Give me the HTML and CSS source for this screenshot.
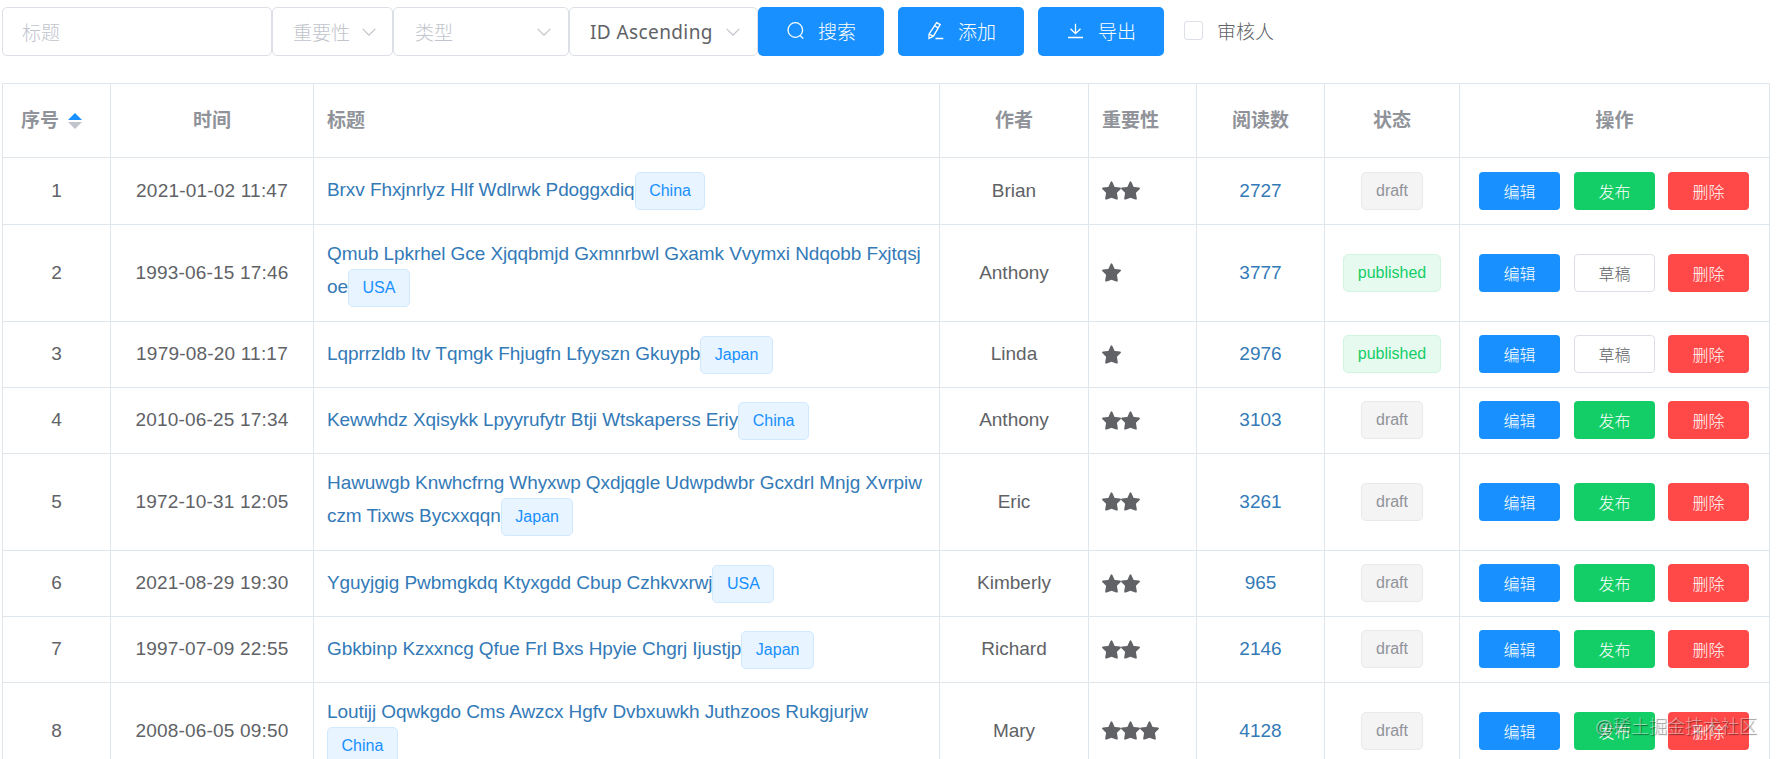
FILE: index.html
```html
<!DOCTYPE html>
<html lang="zh-CN">
<head>
    <meta charset="UTF-8">
    <meta name="viewport" content="width=device-width, initial-scale=1.0">
    <title>文章列表</title>
    <link rel="stylesheet" href="styles.css">
</head>
<body>
    <!-- shared icons -->
    <svg class="icon-defs">
        <symbol id="star" viewBox="0 0 19 19"><path d="M8.6 1Q9.5-.6 10.4 1L12.4 5.4Q12.6 5.9 13.2 6L17.9 6.6Q19.6 7 18.5 8.2L15.2 11.5Q14.9 11.8 15 12.4L15.8 17.2Q15.9 19.1 14.3 18.4L10.1 16.9Q9.5 16.7 8.9 16.9L4.7 18.4Q3.1 19.1 3.2 17.2L4 12.4Q4.1 11.8 3.8 11.5L.5 8.2Q-.6 7 1.1 6.6L5.8 6Q6.4 5.9 6.6 5.4Z"/></symbol>
        <symbol id="arrow" viewBox="0 0 14 8"><path d="M.7.8L7 7.2L13.3.8"/></symbol>
    </svg>

    <div class="filter">
        <div class="field title-field"><span>标题</span></div>
        <div class="field level-field"><span>重要性</span><svg class="arrow"><use href="#arrow"/></svg></div>
        <div class="field type-field"><span>类型</span><svg class="arrow"><use href="#arrow"/></svg></div>
        <div class="field sort-field"><span>ID Ascending</span><svg class="arrow"><use href="#arrow"/></svg></div>
        <button class="tool-btn"><svg viewBox="0 0 19 19"><circle cx="9.3" cy="9" r="7.3"/><path d="M14 14.5L17.3 17.6"/></svg>搜索</button>
        <button class="tool-btn"><svg viewBox="0 0 19 19"><path d="M10.6 1.6L14.2 3.6L7.4 15.2L3 17.4L3 13.1ZM8.7 4.9L12.3 6.9M3 13.1L7.4 15.2M9.5 17.5H17.3"/></svg>添加</button>
        <button class="tool-btn"><svg viewBox="0 0 19 19"><path d="M9.5 2.8V12.6M4.5 7.7L9.5 12.7L14.5 7.7M2 16.5H17"/></svg>导出</button>
        <label class="reviewer"><span class="checkbox"></span>审核人</label>
    </div>

    <table class="list">
        <colgroup>
            <col class="col-id"><col class="col-date"><col class="col-title"><col class="col-author"><col class="col-level"><col class="col-reads"><col class="col-status"><col class="col-actions">
        </colgroup>
        <thead>
            <tr>
                <th><div class="sortable">序号<span class="carets"><i class="up"></i><i class="down"></i></span></div></th>
                <th>时间</th>
                <th class="left">标题</th>
                <th>作者</th>
                <th class="left">重要性</th>
                <th>阅读数</th>
                <th>状态</th>
                <th>操作</th>
            </tr>
        </thead>
        <tbody>
            <tr class="first">
                <td>1</td>
                <td class="date">2021-01-02 11:47</td>
                <td class="title"><a>Brxv Fhxjnrlyz Hlf Wdlrwk Pdoggxdiq</a><span class="tag">China</span></td>
                <td>Brian</td>
                <td class="stars"><svg><use href="#star"/></svg><svg><use href="#star"/></svg></td>
                <td class="reads">2727</td>
                <td><span class="tag info">draft</span></td>
                <td><div class="actions"><button class="edit">编辑</button><button class="publish">发布</button><button class="delete">删除</button></div></td>
            </tr>
            <tr class="tall">
                <td>2</td>
                <td class="date">1993-06-15 17:46</td>
                <td class="title"><a>Qmub Lpkrhel Gce Xjqqbmjd Gxmnrbwl Gxamk Vvymxi Ndqobb Fxjtqsj<br>oe</a><span class="tag">USA</span></td>
                <td>Anthony</td>
                <td class="stars"><svg><use href="#star"/></svg></td>
                <td class="reads">3777</td>
                <td><span class="tag success">published</span></td>
                <td><div class="actions"><button class="edit">编辑</button><button class="to-draft">草稿</button><button class="delete">删除</button></div></td>
            </tr>
            <tr>
                <td>3</td>
                <td class="date">1979-08-20 11:17</td>
                <td class="title"><a>Lqprrzldb Itv Tqmgk Fhjugfn Lfyyszn Gkuypb</a><span class="tag">Japan</span></td>
                <td>Linda</td>
                <td class="stars"><svg><use href="#star"/></svg></td>
                <td class="reads">2976</td>
                <td><span class="tag success">published</span></td>
                <td><div class="actions"><button class="edit">编辑</button><button class="to-draft">草稿</button><button class="delete">删除</button></div></td>
            </tr>
            <tr>
                <td>4</td>
                <td class="date">2010-06-25 17:34</td>
                <td class="title"><a>Kewwhdz Xqisykk Lpyyrufytr Btji Wtskaperss Eriy</a><span class="tag">China</span></td>
                <td>Anthony</td>
                <td class="stars"><svg><use href="#star"/></svg><svg><use href="#star"/></svg></td>
                <td class="reads">3103</td>
                <td><span class="tag info">draft</span></td>
                <td><div class="actions"><button class="edit">编辑</button><button class="publish">发布</button><button class="delete">删除</button></div></td>
            </tr>
            <tr class="tall">
                <td>5</td>
                <td class="date">1972-10-31 12:05</td>
                <td class="title"><a>Hawuwgb Knwhcfrng Whyxwp Qxdjqgle Udwpdwbr Gcxdrl Mnjg Xvrpiw<br>czm Tixws Bycxxqqn</a><span class="tag">Japan</span></td>
                <td>Eric</td>
                <td class="stars"><svg><use href="#star"/></svg><svg><use href="#star"/></svg></td>
                <td class="reads">3261</td>
                <td><span class="tag info">draft</span></td>
                <td><div class="actions"><button class="edit">编辑</button><button class="publish">发布</button><button class="delete">删除</button></div></td>
            </tr>
            <tr>
                <td>6</td>
                <td class="date">2021-08-29 19:30</td>
                <td class="title"><a>Yguyjgig Pwbmgkdq Ktyxgdd Cbup Czhkvxrwj</a><span class="tag">USA</span></td>
                <td>Kimberly</td>
                <td class="stars"><svg><use href="#star"/></svg><svg><use href="#star"/></svg></td>
                <td class="reads">965</td>
                <td><span class="tag info">draft</span></td>
                <td><div class="actions"><button class="edit">编辑</button><button class="publish">发布</button><button class="delete">删除</button></div></td>
            </tr>
            <tr>
                <td>7</td>
                <td class="date">1997-07-09 22:55</td>
                <td class="title"><a>Gbkbinp Kzxxncg Qfue Frl Bxs Hpyie Chgrj Ijustjp</a><span class="tag">Japan</span></td>
                <td>Richard</td>
                <td class="stars"><svg><use href="#star"/></svg><svg><use href="#star"/></svg></td>
                <td class="reads">2146</td>
                <td><span class="tag info">draft</span></td>
                <td><div class="actions"><button class="edit">编辑</button><button class="publish">发布</button><button class="delete">删除</button></div></td>
            </tr>
            <tr class="tall">
                <td>8</td>
                <td class="date">2008-06-05 09:50</td>
                <td class="title"><a>Loutijj Oqwkgdo Cms Awzcx Hgfv Dvbxuwkh Juthzoos Rukgjurjw</a><br><span class="tag">China</span></td>
                <td>Mary</td>
                <td class="stars"><svg><use href="#star"/></svg><svg><use href="#star"/></svg><svg><use href="#star"/></svg></td>
                <td class="reads">4128</td>
                <td><span class="tag info">draft</span></td>
                <td><div class="actions"><button class="edit">编辑</button><button class="publish">发布</button><button class="delete">删除</button></div></td>
            </tr>
        </tbody>
    </table>
    <div class="watermark">@稀土掘金技术社区</div>
</body>
</html>
```

FILE: styles.css
```css
* {
    box-sizing: border-box;
}
body {
    position: relative;
    height: 759px;
    margin: 0;
    padding: 7px 0 0 2px;
    overflow: hidden;
    background-color: #fff;
    color: #606266;
    font-family: "Liberation Sans", "Noto Sans CJK SC", sans-serif;
    font-size: 19px;
    font-weight: 300;
}
button {
    font-family: inherit;
    font-weight: 300;
    border: none;
    padding: 0;
    cursor: pointer;
}
.icon-defs {
    display: none;
}

/* filter bar */
.filter {
    display: flex;
    align-items: center;
    height: 49px;
    margin-bottom: 27px;
}
.field {
    display: flex;
    align-items: center;
    justify-content: space-between;
    height: 49px;
    padding: 0 17px 0 20px;
    border: 1px solid #dcdfe6;
    border-radius: 5px;
    color: #c0c4cc;
    white-space: nowrap;
}
.title-field {
    width: 270px;
    padding-left: 19px;
}
.level-field {
    width: 121px;
    padding-right: 16px;
}
.type-field {
    width: 176px;
    padding-left: 21px;
}
.sort-field {
    width: 189px;
    color: #606266;
    font-family: "Noto Sans", sans-serif;
    font-weight: normal;
    letter-spacing: 0.4px;
}
.arrow {
    width: 14px;
    height: 8px;
    fill: none;
    stroke: #c0c4cc;
    stroke-width: 1.2;
}
.tool-btn {
    display: flex;
    align-items: center;
    gap: 13px;
    width: 126px;
    height: 49px;
    margin-right: 14px;
    padding: 0 0 2px 28px;
    border-radius: 5px;
    background-color: #1890ff;
    color: #fff;
    font-size: 19px;
}
.tool-btn svg {
    width: 19px;
    height: 19px;
    fill: none;
    stroke: #fff;
    stroke-width: 1.3;
}
.reviewer {
    display: flex;
    align-items: center;
    gap: 14px;
    margin-left: 6px;
    padding-bottom: 2px;
}
.checkbox {
    width: 19px;
    height: 19px;
    border: 1px solid #dcdfe6;
    border-radius: 3px;
}

/* table */
.list {
    width: 1768px;
    table-layout: fixed;
    border-collapse: separate;
    border-spacing: 0;
    border: solid #dfe6ec;
    border-width: 1px 0 0 1px;
}
.col-id { width: 108px; }
.col-date { width: 203px; }
.col-title { width: 626px; }
.col-author { width: 149px; }
.col-level { width: 108px; }
.col-reads { width: 128px; }
.col-status { width: 135px; }
.col-actions { width: 310px; }
.list th,
.list td {
    height: 66px;
    padding: 0 0 1px;
    border: solid #dfe6ec;
    border-width: 0 1px 1px 0;
    text-align: center;
    vertical-align: middle;
    line-height: 30px;
}
.list th {
    height: 74px;
    padding: 0;
    color: #909399;
    font-weight: bold;
}
.list th.left {
    padding-left: 13px;
    text-align: left;
}
.list .first td {
    height: 67px;
}
.list .tall td {
    height: 97px;
}
.sortable {
    display: flex;
    align-items: center;
    padding-left: 18px;
}
.carets {
    display: flex;
    flex-direction: column;
    gap: 2px;
    margin-left: 9px;
}
.carets i {
    width: 0;
    height: 0;
    border: solid transparent;
}
.carets .up {
    border-width: 0 7px 7px;
    border-bottom-color: #1890ff;
}
.carets .down {
    border-width: 7px 7px 0;
    border-top-color: #c0c4cc;
}
.date {
    letter-spacing: 0.2px;
}
.reads {
    color: #337ab7;
}
.list td.title {
    padding: 14px 0 0 13px;
    text-align: left;
    vertical-align: top;
    white-space: nowrap;
}
.title a {
    color: #337ab7;
    letter-spacing: -0.08px;
}
.tag {
    display: inline-block;
    height: 38px;
    padding: 0 13.5px;
    border: 1px solid #d1e9ff;
    border-radius: 5px;
    background-color: #e8f4ff;
    color: #1890ff;
    font-size: 16px;
    line-height: 36px;
    vertical-align: middle;
}
.title .tag {
    vertical-align: baseline;
}
.tag.info {
    border-color: #e9e9eb;
    background-color: #f4f4f5;
    color: #909399;
}
.tag.success {
    border-color: #d0f5e0;
    background-color: #e7faf0;
    color: #13ce66;
}
.list td.stars {
    padding-left: 13px;
    text-align: left;
    font-size: 0;
}
.stars svg {
    width: 19px;
    height: 19px;
    fill: #606266;
    vertical-align: middle;
}
.actions {
    display: flex;
    gap: 13px;
    padding-left: 19px;
}
.actions button {
    width: 81px;
    height: 38px;
    border-radius: 4px;
    color: #fff;
    font-size: 16px;
}
.actions .edit {
    background-color: #1890ff;
    margin-right: 1px;
}
.actions .publish {
    background-color: #13ce66;
}
.actions .to-draft {
    border: 1px solid #dcdfe6;
    background-color: #fff;
    color: #606266;
}
.actions .delete {
    background-color: #ff4949;
}

.watermark {
    position: absolute;
    right: 22px;
    bottom: 19px;
    color: rgba(255, 255, 255, 0.5);
    font-size: 18px;
    line-height: 26px;
    text-shadow: 1px 1px 1px rgba(0, 0, 0, 0.5);
}
```
